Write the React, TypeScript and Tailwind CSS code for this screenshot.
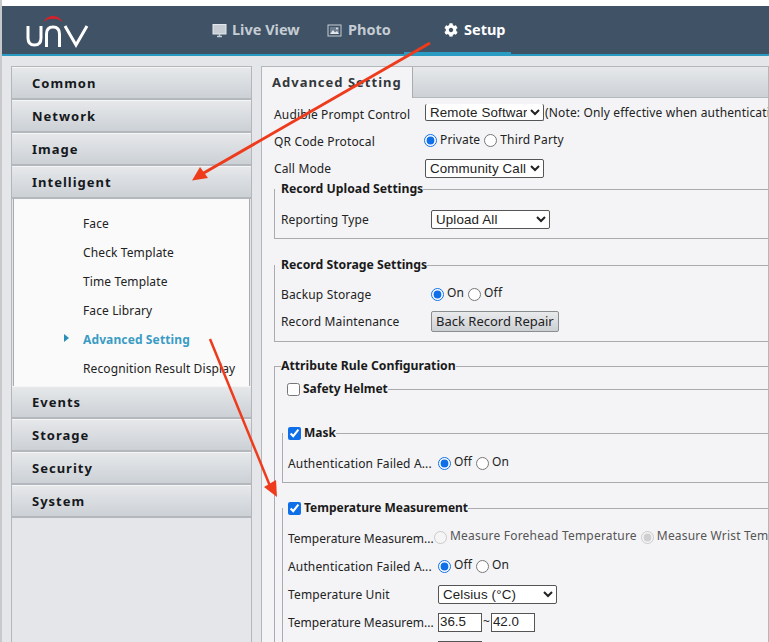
import { FaCog } from 'react-icons/fa';

const SIDE_TOP = ['Common', 'Network', 'Image', 'Intelligent'];
const SIDE_SUB = ['Face', 'Check Template', 'Time Template', 'Face Library', 'Advanced Setting', 'Recognition Result Display'];
const SIDE_BOTTOM = ['Events', 'Storage', 'Security', 'System'];

const labelFont = "font-['Noto_Sans','Open_Sans',sans-serif]";
const inputFont = "font-['Liberation_Sans',Arial,sans-serif]";

function SideHead({ label }: { label: string }) {
  return (
    <div className={`flex items-center h-[33px] pl-[20px] pt-[2px] border-b-2 border-[#b4b8bc] border-t border-t-[#f4f5f6] bg-gradient-to-b from-[#e6e8ea] to-[#ccd1d6] text-[13px] font-bold tracking-[1px] text-[#15181c] ${labelFont}`}>
      {label}
    </div>
  );
}

function Radio({ label, checked, disabled }: { label: string; checked?: boolean; disabled?: boolean }) {
  return (
    <label className="flex items-center gap-[3px] mr-[4px] whitespace-nowrap">
      <input type="radio" readOnly checked={!!checked} disabled={disabled} className="w-[13px] h-[13px] m-0 accent-[#0f6fe8]" />
      <span className="-mt-[2px]">{label}</span>
    </label>
  );
}

function Check({ checked }: { checked?: boolean }) {
  return <input type="checkbox" readOnly checked={!!checked} className="w-[13px] h-[13px] m-0 accent-[#0f6fe8]" />;
}

function Select({ value, className }: { value: string; className: string }) {
  return (
    <select defaultValue={value} className={`border border-[#555] rounded-[2px] bg-white text-[13.33px] text-[#222] appearance-auto ${inputFont} ${className}`}>
      <option>{value}</option>
    </select>
  );
}

function Row({ label, labelWidth, height, children }: { label: string; labelWidth: string; height: string; children: React.ReactNode }) {
  return (
    <div className={`flex items-center ${height}`}>
      <span className={`${labelWidth} mt-[2px] shrink-0 whitespace-nowrap`}>{label}</span>
      {children}
    </div>
  );
}

function Group({ legend, className, children }: { legend: React.ReactNode; className: string; children?: React.ReactNode }) {
  return (
    <fieldset className={`border border-[#a9abae] min-w-[600px] w-[600px] ${className}`}>
      <legend className="px-0 font-bold text-[12.25px] tracking-normal text-[#1a1a1a] leading-[16px] flex items-center gap-[3px]">{legend}</legend>
      {children}
    </fieldset>
  );
}

function Arrows() {
  return (
    <svg className="absolute left-0 top-0 pointer-events-none" width="769" height="642" viewBox="0 0 769 642" fill="none">
      <path d="M428 43L200 174" stroke="#ee3b1c" strokeWidth="3" />
      <path d="M190 180.5L198 167L206 178Z" fill="#ee3b1c" />
      <path d="M208 339L268 486" stroke="#ee3b1c" strokeWidth="2.5" />
      <path d="M275 497L262 487L274 480Z" fill="#ee3b1c" />
    </svg>
  );
}

export default function App() {
  return (
    <div className="relative w-[769px] h-[642px] overflow-hidden border-l-2 border-[#c8c9cb] bg-[#e4e6e9]">
      {/* Header */}
      <div className="h-[6px] bg-white" />
      <header className="flex h-[50px] bg-[#3f5266] border-b-2 border-[#2a9cc4]">
        <svg width="86" height="48" viewBox="0 0 86 48" fill="none" className="ml-[18px] shrink-0">
          <path d="M23 16C29 7.5 37 7.5 43 16C37 11.5 29 11.5 23 16Z" fill="#d2232a" />
          <path d="M8 20V32C8 37 10.5 39 14.5 39C18.5 39 21 37 21 32V20" stroke="white" strokeWidth="3" />
          <path d="M26.5 41V28C26.5 23 29 21 33 21C37 21 39.5 23 39.5 28V41" stroke="white" strokeWidth="3" />
          <path d="M45 20L56 39L67 20" stroke="white" strokeWidth="3" />
        </svg>
        <nav className={`flex ml-[106px] text-[14.5px] font-bold ${labelFont}`}>
          <div className="flex items-center gap-[5px] text-[#c5ccd3] w-[115px]">
            <svg width="15" height="15" viewBox="0 0 15 15" fill="none">
              <rect x="1" y="1.5" width="13" height="9.5" fill="#c5ccd3" stroke="#e4e8ec" />
              <path d="M5 13.5H10M7.5 11V13.5" stroke="#c5ccd3" strokeWidth="1.5" />
            </svg>
            Live View
          </div>
          <div className="flex items-center gap-[6px] text-[#c5ccd3] w-[77px]">
            <svg width="15" height="15" viewBox="0 0 15 15" fill="none">
              <rect x="1" y="2" width="13" height="11" stroke="#c5ccd3" />
              <rect x="3" y="4" width="9" height="7" fill="#6d7d8d" />
              <path d="M3 11L6 7L8 9.5L10 8L12 11Z" fill="#e4e8ec" />
              <circle cx="10" cy="5.5" r="1" fill="#e4e8ec" />
            </svg>
            Photo
          </div>
          <div className="relative flex items-center gap-[6px] text-white w-[107px] pl-[40px]">
            <FaCog size={14} />
            Setup
            <span className="absolute left-0 right-0 bottom-0 h-[2px] bg-[#2a9cc4]" />
          </div>
        </nav>
      </header>

      {/* Body */}
      <div className="flex h-[586px] pt-[10px]">
        <aside className="ml-[9px] w-[241px] shrink-0 border border-[#b4b7ba] border-b-0 bg-[#e4e6e9]">
          {SIDE_TOP.map((label) => (
            <SideHead key={label} label={label} />
          ))}
          <ul className={`h-[187px] mx-[1px] pt-[10px] bg-[#fafafa] border-x border-[#a9acaf] text-[12px] tracking-[0.12px] text-[#222] ${labelFont}`}>
            {SIDE_SUB.map((label) => {
              const active = label === 'Advanced Setting';
              return (
                <li key={label} className={`relative flex items-center h-[29px] pl-[69px] whitespace-nowrap ${active ? 'font-bold text-[#3a9cc4]' : ''}`}>
                  {active && <span className="absolute left-[50px] top-[9px] w-0 h-0 border-y-[4px] border-y-transparent border-l-[5px] border-l-[#2a8fb8]" />}
                  {label}
                </li>
              );
            })}
          </ul>
          {SIDE_BOTTOM.map((label) => (
            <SideHead key={label} label={label} />
          ))}
        </aside>

        <main className="ml-[9px] flex-1 min-w-0 border border-[#b4b7ba] border-b-0 bg-[#f4f4f6] overflow-hidden">
          <div className="flex h-[31px] bg-gradient-to-b from-[#e6e8ea] to-[#ccd1d6] border-b border-[#b4b8bc]">
            <div className={`flex items-center h-[31px] px-[10px] bg-[#f4f4f6] border-r border-[#a9abae] text-[13px] font-bold tracking-[1px] text-[#33373b] ${labelFont}`}>
              Advanced Setting
            </div>
          </div>

          <div className={`pl-[12px] pt-[3px] text-[12px] tracking-[0.15px] text-[#222] ${labelFont}`}>
            <Row label="Audible Prompt Control" labelWidth="w-[151px]" height="h-[26px]">
              <Select value="Remote Software" className="w-[119px] h-[17px] mb-[3px] border-t-0" />
              <span className="ml-[1px] mb-[3px] whitespace-nowrap">(Note: Only effective when authentication</span>
            </Row>
            <Row label="QR Code Protocal" labelWidth="w-[150px]" height="h-[27px]">
              <Radio label="Private" checked />
              <Radio label="Third Party" />
            </Row>
            <Row label="Call Mode" labelWidth="w-[151px]" height="h-[28px]">
              <Select value="Community Call" className="w-[119px] h-[19px]" />
            </Row>

            <Group legend={<span className="ml-[6px]">Record Upload Settings</span>} className="h-[58px] -mt-[1px]">
              <div className="pl-[6px]">
                <Row label="Reporting Type" labelWidth="w-[150px]" height="h-[28px] mt-[8px]">
                  <Select value="Upload All" className="w-[119px] h-[19px]" />
                </Row>
              </div>
            </Group>

            <Group legend={<span className="ml-[6px]">Record Storage Settings</span>} className="h-[85px] mt-[18px]">
              <div className="pl-[6px] pt-[8px]">
                <Row label="Backup Storage" labelWidth="w-[150px]" height="h-[26px]">
                  <Radio label="On" checked />
                  <Radio label="Off" />
                </Row>
                <Row label="Record Maintenance" labelWidth="w-[150px]" height="h-[28px]">
                  <button className="h-[21px] px-[4px] rounded-[2px] border border-[#8a8d90] bg-gradient-to-b from-[#e9eaec] to-[#cdd0d3] text-[13px] tracking-normal text-[#222] whitespace-nowrap">
                    Back Record Repair
                  </button>
                </Row>
              </div>
            </Group>

            <Group legend={<span>Attribute Rule Configuration</span>} className="h-[400px] mt-[16px] pl-[6px]">
              <Group legend={<><span className="w-[3px]" /><Check /><span className="text-[12px]">Safety Helmet</span></>} className="h-[36px] mt-[7px] border-x-0 border-b-0">
                <span />
              </Group>
              <Group legend={<><span className="w-[2px]" /><Check checked /><span className="text-[12px]">Mask</span></>} className="h-[58px] mt-[8px] ml-[1px]">
                <div className="pl-[5px] pt-[8px]">
                  <Row label="Authentication Failed A..." labelWidth="w-[150px]" height="h-[28px]">
                    <Radio label="Off" checked />
                    <Radio label="On" />
                  </Row>
                </div>
              </Group>
              <Group legend={<><span className="w-[2px]" /><Check checked /><span className="text-[12px]">Temperature Measurement</span></>} className="h-[200px] mt-[17px] ml-[1px]">
                <div className="pl-[5px] pt-[8px]">
                  <Row label="Temperature Measurem..." labelWidth="w-[146px]" height="h-[28px] tracking-normal">
                    <div className="flex -mt-[2px] tracking-[0.2px] text-[#555]">
                      <Radio label="Measure Forehead Temperature" disabled />
                      <Radio label="Measure Wrist Temperature" checked disabled />
                    </div>
                  </Row>
                  <Row label="Authentication Failed A..." labelWidth="w-[150px]" height="h-[28px]">
                    <Radio label="Off" checked />
                    <Radio label="On" />
                  </Row>
                  <Row label="Temperature Unit" labelWidth="w-[150px]" height="h-[28px]">
                    <Select value="Celsius (°C)" className="w-[119px] h-[19px]" />
                  </Row>
                  <Row label="Temperature Measurem..." labelWidth="w-[150px]" height="h-[28px] tracking-normal">
                    <input readOnly value="36.5" className={`w-[44px] h-[19px] px-[1px] border border-[#555] bg-white text-[13.33px] ${inputFont}`} />
                    <span className="mx-[1px]">~</span>
                    <input readOnly value="42.0" className={`w-[44px] h-[19px] px-[1px] border border-[#555] bg-white text-[13.33px] ${inputFont}`} />
                  </Row>
                  <Row label="" labelWidth="w-[150px]" height="h-[28px]">
                    <input readOnly className="w-[44px] h-[19px] border border-[#555] bg-white" />
                  </Row>
                </div>
              </Group>
            </Group>
          </div>
        </main>
      </div>

      <Arrows />
    </div>
  );
}
